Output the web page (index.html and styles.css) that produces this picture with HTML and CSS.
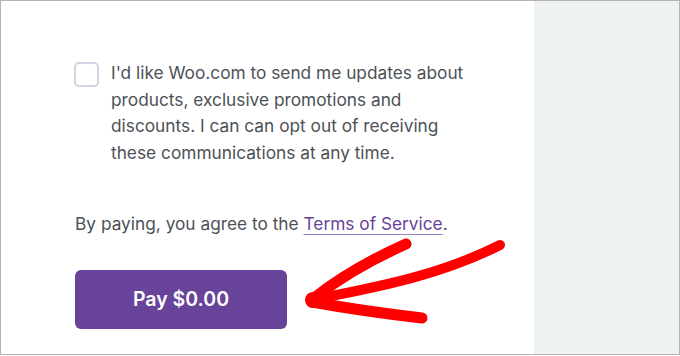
FILE: index.html
```html
<!DOCTYPE html>
<html>
<head>
<meta charset="utf-8">
<link rel="stylesheet" href="styles.css">
</head>
<body>
<div class="frame">
  <main class="main">
    <label class="optin">
      <span class="box"></span>
      <span class="optin-text">I'd like Woo.com to send me updates about products, exclusive promotions and discounts. I can can opt out of receiving these communications at any time.</span>
    </label>
    <p class="terms">By paying, you agree to the <a class="link" href="#">Terms of Service</a>.</p>
    <button class="pay">Pay $0.00</button>
  </main>
  <aside class="side"></aside>
  <svg class="arrow" width="680" height="356" viewBox="0 0 680 356">
    <g fill="none" stroke="#ff0000" stroke-linecap="round" stroke-linejoin="round">
      <path d="M312 300 C 365 289, 435 278, 500 245" stroke-width="10"/>
      <path d="M314 298 Q 352 268, 406 244" stroke-width="11"/>
      <path d="M312 302 Q 362 311, 422 318" stroke-width="11"/>
    </g>
    <circle cx="313" cy="300" r="8" fill="#ff0000"/>
  </svg>
</div>
</body>
</html>
```

FILE: styles.css
```css
html, body {
  margin: 0;
  padding: 0;
  background: #ffffff;
}
.frame {
  position: relative;
  width: 680px;
  height: 355px;
  box-sizing: border-box;
  border: 1px solid #b4b4b4;
  display: flex;
  overflow: hidden;
  font-family: Inter, "Liberation Sans", sans-serif;
}
.main {
  width: 533px;
  box-sizing: border-box;
  padding: 59px 0 0 73px;
  background: #ffffff;
}
.side {
  flex: 1;
  background: #eff2f3;
}
.optin {
  display: flex;
  align-items: flex-start;
  gap: 12px;
}
.box {
  flex: none;
  width: 25px;
  height: 25px;
  box-sizing: border-box;
  border: 2px solid #d4d2e2;
  border-radius: 5px;
  margin-top: 2px;
}
.optin-text {
  font-size: 17.3px;
  line-height: 26.5px;
  color: #4b5157;
  width: 375px;
}
.terms {
  margin: 45px 0 0 1px;
  font-size: 17.3px;
  line-height: 26.5px;
  color: #4b5157;
}
.link {
  color: #674399;
  text-decoration: underline;
  text-decoration-color: #9a82c4;
  text-underline-offset: 4px;
  text-decoration-thickness: 1px;
}
.pay {
  display: block;
  margin: 32px 0 0 1px;
  width: 212px;
  height: 59px;
  border: none;
  border-radius: 6px;
  background: #674399;
  color: #ffffff;
  font-family: Inter, "Liberation Sans", sans-serif;
  font-size: 19.5px;
  font-weight: 600;
}
.arrow {
  position: absolute;
  left: -1px;
  top: -1px;
}
```
